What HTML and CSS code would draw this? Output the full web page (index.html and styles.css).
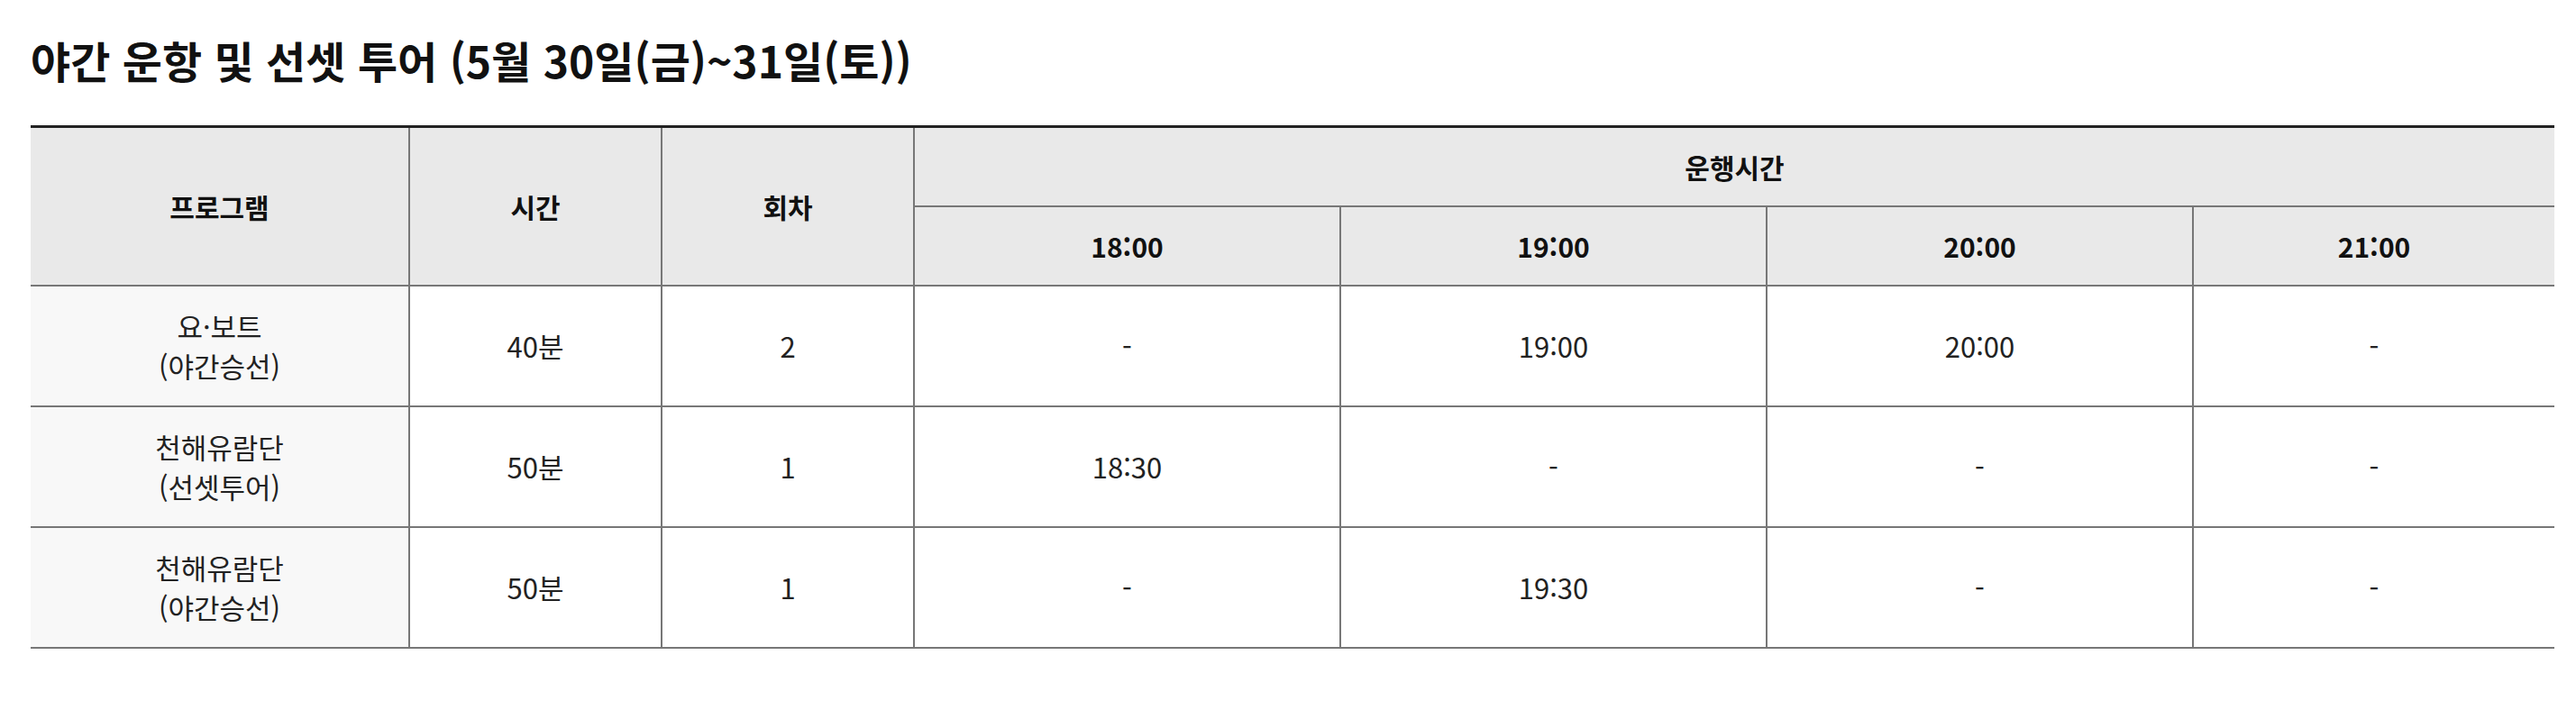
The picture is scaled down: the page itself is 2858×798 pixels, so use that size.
FILE: index.html
```html
<!DOCTYPE html>
<html lang="ko">
<head>
<meta charset="utf-8">
<title>야간 운항 및 선셋 투어</title>
<link rel="stylesheet" href="styles.css">
</head>
<body>
<section class="schedule">
  <h2 class="schedule-title">야간 운항 및 선셋 투어 (5월 30일(금)~31일(토))</h2>
  <table class="schedule-table">
    <colgroup>
      <col class="c-prog">
      <col class="c-time">
      <col class="c-count">
      <col class="c-slot">
      <col class="c-slot">
      <col class="c-slot">
      <col class="c-last">
    </colgroup>
    <thead>
      <tr>
        <th rowspan="2">프로그램</th>
        <th rowspan="2">시간</th>
        <th rowspan="2">회차</th>
        <th colspan="4">운행시간</th>
      </tr>
      <tr>
        <th>18:00</th>
        <th>19:00</th>
        <th>20:00</th>
        <th>21:00</th>
      </tr>
    </thead>
    <tbody>
      <tr>
        <td class="prog">요·보트<br>(야간승선)</td>
        <td>40분</td>
        <td>2</td>
        <td>-</td>
        <td>19:00</td>
        <td>20:00</td>
        <td>-</td>
      </tr>
      <tr>
        <td class="prog">천해유람단<br>(선셋투어)</td>
        <td>50분</td>
        <td>1</td>
        <td>18:30</td>
        <td>-</td>
        <td>-</td>
        <td>-</td>
      </tr>
      <tr>
        <td class="prog">천해유람단<br>(야간승선)</td>
        <td>50분</td>
        <td>1</td>
        <td>-</td>
        <td>19:30</td>
        <td>-</td>
        <td>-</td>
      </tr>
    </tbody>
  </table>
</section>
</body>
</html>
```

FILE: styles.css
```css
html, body {
  margin: 0;
  padding: 0;
  background: #fff;
}

body {
  font-family: "Noto Sans CJK KR", "Noto Sans", sans-serif;
  color: #222;
}

.schedule {
  padding: 31px 24px 0 34px;
}

.schedule-title {
  margin: 0 0 38px 0;
  font-size: 48px;
  line-height: 70px;
  font-weight: 700;
  color: #111;
}

.schedule-table {
  width: 2800px;
  table-layout: fixed;
  border-collapse: collapse;
  border-top: 3px solid #222;
  font-size: 30px;
  line-height: 44px;
}

.c-prog { width: 420px; }
.c-time { width: 280px; }
.c-count { width: 280px; }
.c-slot { width: 473px; }
.c-last { width: 401px; }

.schedule-table th,
.schedule-table td {
  border: 2px solid #777;
  text-align: center;
  vertical-align: middle;
  padding: 21px 10px;
}

.schedule-table tr > :first-child { border-left: none; }
.schedule-table tr > :last-child { border-right: none; }
.schedule-table thead tr:first-child th[rowspan] { border-left: 2px solid #777; }
.schedule-table thead tr:first-child th:first-child { border-left: none; }
.schedule-table thead tr:nth-child(2) th:first-child { border-left: 2px solid #777; }

.schedule-table th {
  background: #e9e9e9;
  font-weight: 700;
  color: #111;
}

.schedule-table thead tr:first-child th { border-top: 3px solid #222; }

.schedule-table td {
  padding: 22px 10px;
  background: #fff;
  font-weight: 400;
  font-size: 31px;
}

.schedule-table td.prog {
  background: #f8f8f8;
}
```
